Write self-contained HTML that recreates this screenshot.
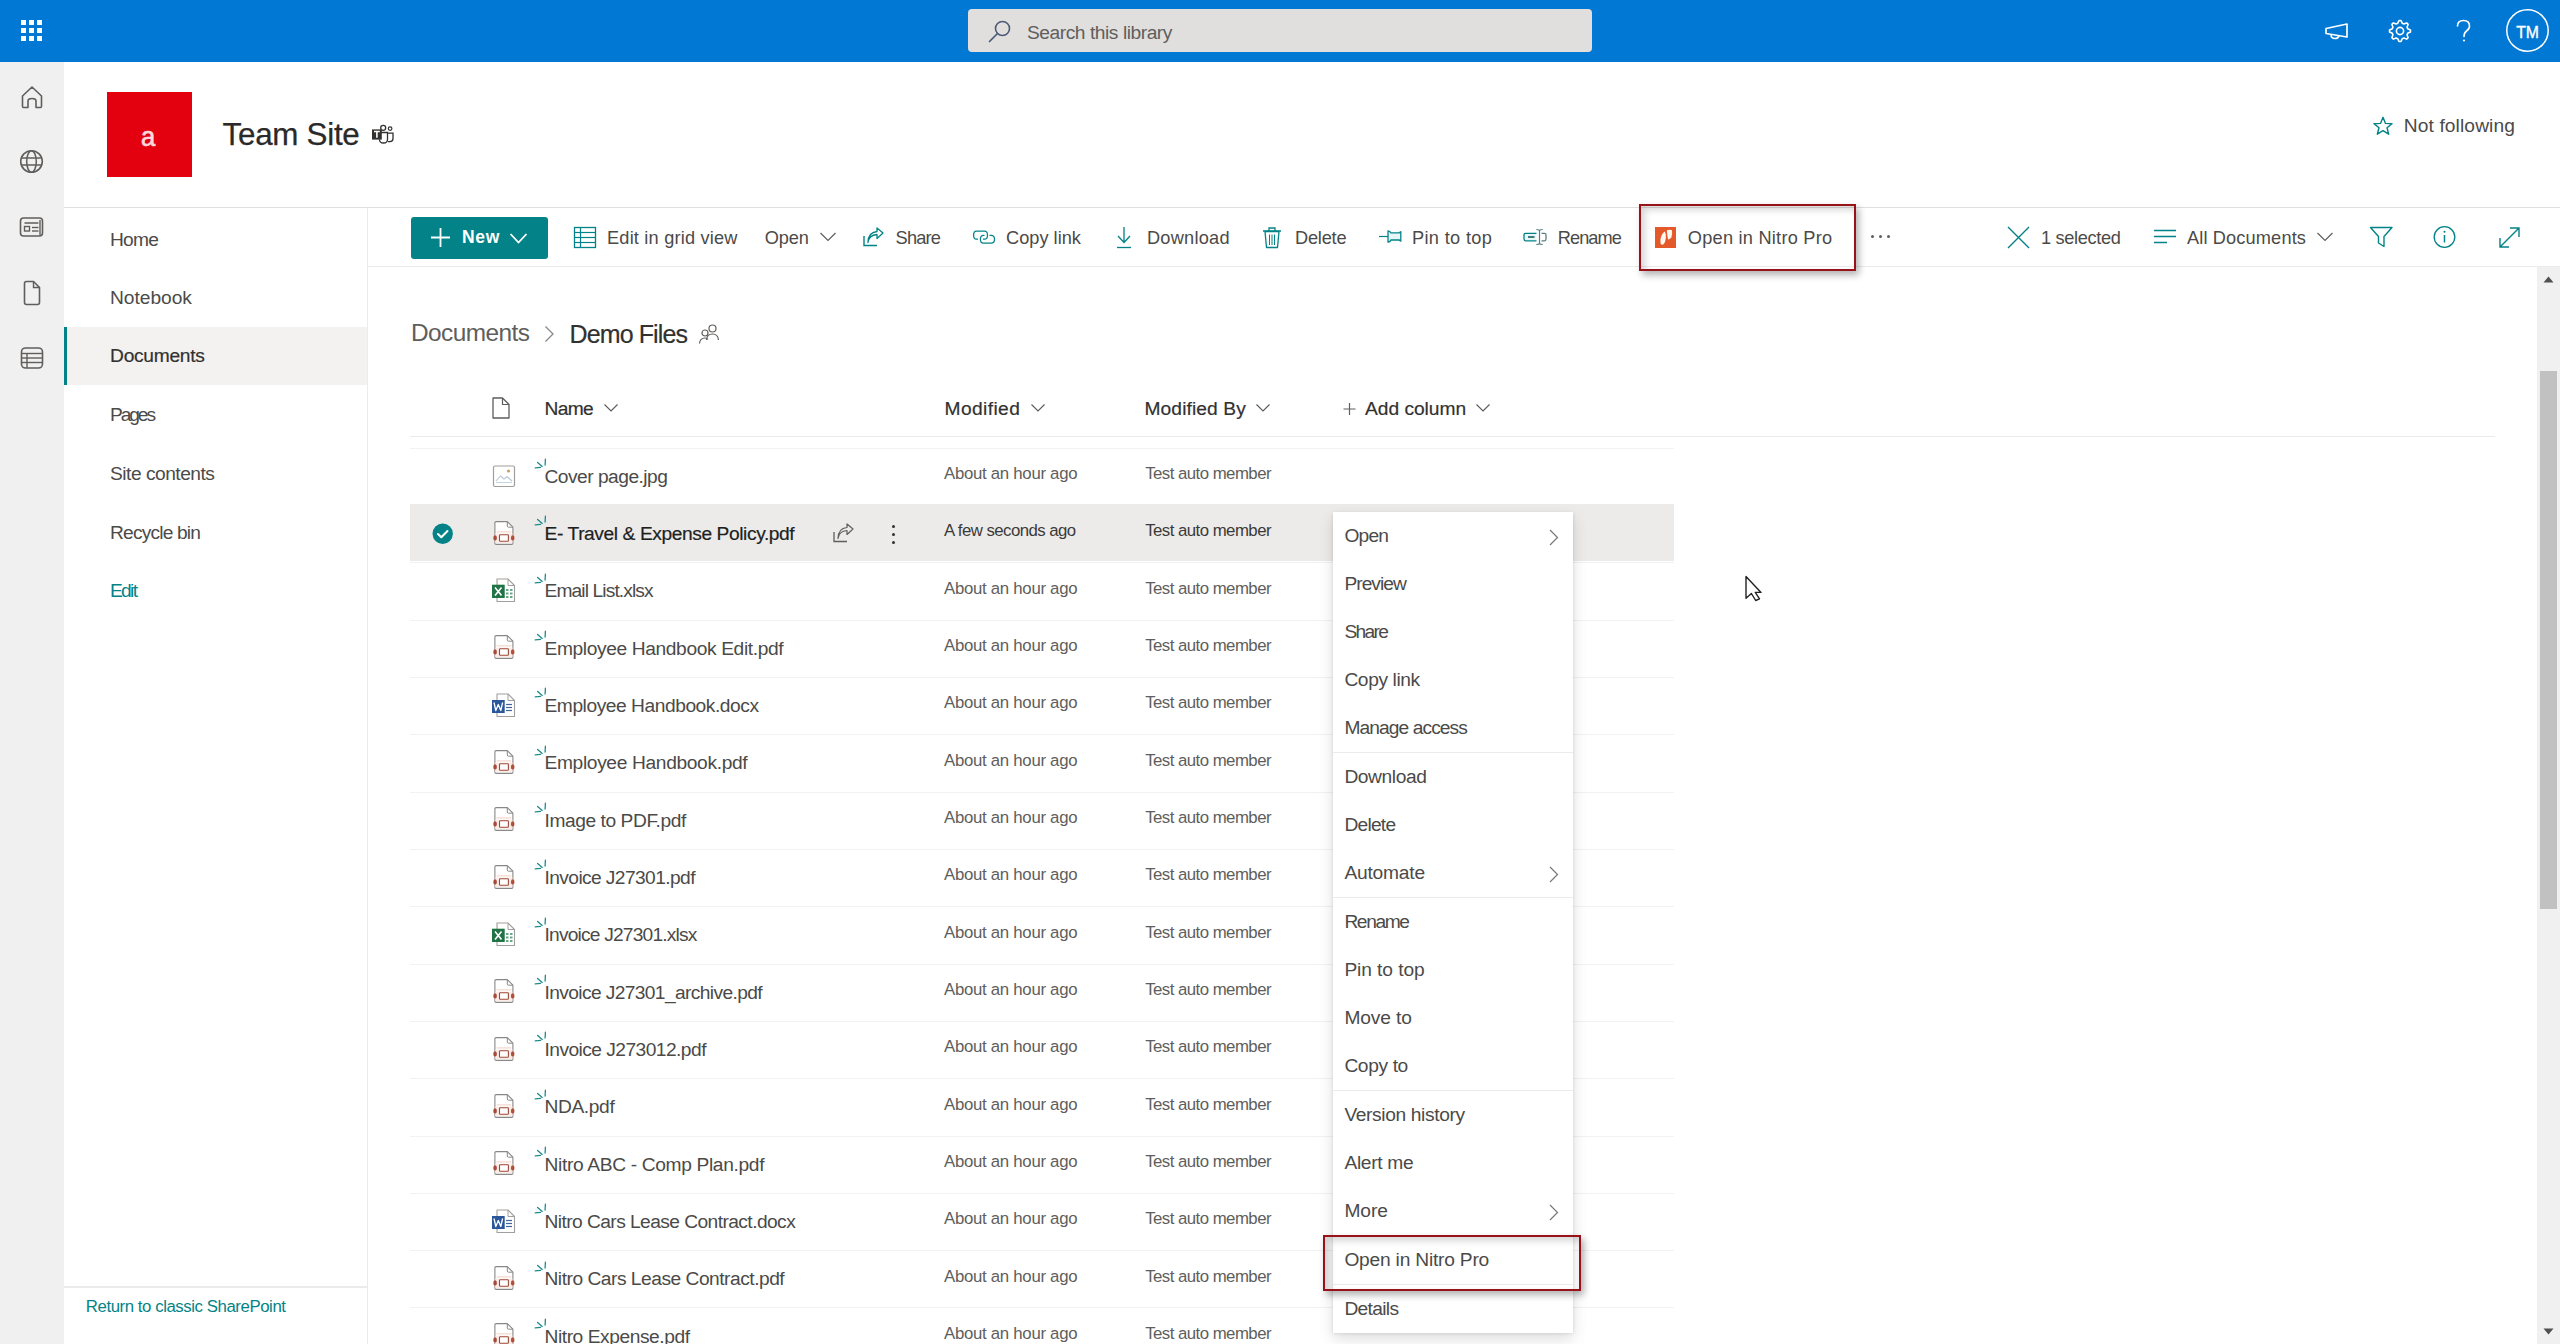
<!DOCTYPE html>
<html><head><meta charset="utf-8"><title>Demo Files - Documents</title>
<style>
html,body{margin:0;padding:0;width:2560px;height:1344px;overflow:hidden;background:#fff;}
body{position:relative;font-family:"Liberation Sans",sans-serif;}
.t{position:absolute;white-space:nowrap;}
.r{position:absolute;}
.s{position:absolute;overflow:visible;}
</style></head><body>
<div class="r" style="left:0px;top:0px;width:2560px;height:62px;background:#0078d4;"></div>
<div class="r" style="left:21px;top:20px;width:5px;height:5px;background:#ffffff;"></div>
<div class="r" style="left:21px;top:28px;width:5px;height:5px;background:#ffffff;"></div>
<div class="r" style="left:21px;top:36px;width:5px;height:5px;background:#ffffff;"></div>
<div class="r" style="left:29px;top:20px;width:5px;height:5px;background:#ffffff;"></div>
<div class="r" style="left:29px;top:28px;width:5px;height:5px;background:#ffffff;"></div>
<div class="r" style="left:29px;top:36px;width:5px;height:5px;background:#ffffff;"></div>
<div class="r" style="left:37px;top:20px;width:5px;height:5px;background:#ffffff;"></div>
<div class="r" style="left:37px;top:28px;width:5px;height:5px;background:#ffffff;"></div>
<div class="r" style="left:37px;top:36px;width:5px;height:5px;background:#ffffff;"></div>
<div class="r" style="left:968px;top:9px;width:624px;height:43px;background:#e1dfdd;border-radius:4px;"></div>
<svg class="s" style="left:987px;top:18px;" width="26" height="26" viewBox="0 0 26 26"><circle cx="15.5" cy="10.5" r="7" fill="none" stroke="#4a5a78" stroke-width="1.6"/><line x1="10.5" y1="15.5" x2="2.5" y2="23.5" stroke="#4a5a78" stroke-width="1.7" stroke-linecap="round"/></svg>
<div class="t" style="left:1027.00px;top:22.50px;font-size:19.2px;line-height:19.2px;color:#605e5c;font-weight:normal;letter-spacing:-0.453px;">Search this library</div>
<svg class="s" style="left:2322px;top:18px;" width="30" height="26" viewBox="0 0 30 26"><path d="M4 10.5 L25 6 L25 19 L4 15.5 Z" fill="none" stroke="#fff" stroke-width="1.7" stroke-linejoin="round"/><path d="M9 16.5 Q9 20.5 13 20.5 Q16.5 20.5 17 17.5" fill="none" stroke="#fff" stroke-width="1.6"/></svg>
<svg class="s" style="left:2389px;top:20px;" width="22" height="22" viewBox="0 0 22 22"><path d="M21.45 9.97 L21.45 12.03 L18.66 13.32 L18.06 14.77 L19.12 17.66 L17.66 19.12 L14.77 18.06 L13.32 18.66 L12.03 21.45 L9.97 21.45 L8.68 18.66 L7.23 18.06 L4.34 19.12 L2.88 17.66 L3.94 14.77 L3.34 13.32 L0.55 12.03 L0.55 9.97 L3.34 8.68 L3.94 7.23 L2.88 4.34 L4.34 2.88 L7.23 3.94 L8.68 3.34 L9.97 0.55 L12.03 0.55 L13.32 3.34 L14.77 3.94 L17.66 2.88 L19.12 4.34 L18.06 7.23 L18.66 8.68 Z" fill="none" stroke="#fff" stroke-width="1.6" stroke-linejoin="round"/><circle cx="11" cy="11" r="3.6" fill="none" stroke="#fff" stroke-width="1.6"/></svg>
<svg class="s" style="left:2454px;top:18px;" width="20" height="26" viewBox="0 0 20 26"><path d="M3.5 8 Q3.5 2.5 9.5 2.5 Q15.5 2.5 15.5 8 Q15.5 11 12.5 13 Q10 14.8 10 18.5" fill="none" stroke="#fff" stroke-width="1.6" stroke-linecap="round"/><circle cx="10" cy="22.5" r="1.1" fill="#fff"/></svg>
<svg class="s" style="left:2505px;top:8px;" width="46" height="46" viewBox="0 0 46 46"><circle cx="22.5" cy="22.5" r="20.7" fill="none" stroke="#fff" stroke-width="1.5"/></svg>
<div class="t" style="left:2516.18px;top:25.03px;font-size:15.8px;line-height:15.8px;color:#ffffff;font-weight:normal;letter-spacing:-0.165px;-webkit-text-stroke:0.35px #ffffff;">TM</div>
<div class="r" style="left:0px;top:62px;width:64px;height:1282px;background:#f0f0f0;"></div>
<svg class="s" style="left:19px;top:84px;" width="26" height="26" viewBox="0 0 26 26"><path d="M3.5 12 L13 3 L22.5 12 L22.5 22.5 Q22.5 23.5 21.5 23.5 L17 23.5 L17 17 Q17 14.5 13 14.5 Q9 14.5 9 17 L9 23.5 L4.5 23.5 Q3.5 23.5 3.5 22.5 Z" fill="none" stroke="#605e5c" stroke-width="1.6" stroke-linejoin="round"/></svg>
<svg class="s" style="left:19px;top:149px;" width="26" height="26" viewBox="0 0 26 26"><circle cx="12.5" cy="12.5" r="10.8" fill="none" stroke="#605e5c" stroke-width="1.6"/><ellipse cx="12.5" cy="12.5" rx="4.8" ry="10.8" fill="none" stroke="#605e5c" stroke-width="1.5"/><line x1="2" y1="9" x2="23" y2="9" stroke="#605e5c" stroke-width="1.5"/><line x1="2" y1="16" x2="23" y2="16" stroke="#605e5c" stroke-width="1.5"/></svg>
<svg class="s" style="left:19px;top:215px;" width="26" height="24" viewBox="0 0 26 24"><rect x="1.5" y="3" width="22" height="18" rx="3" fill="none" stroke="#605e5c" stroke-width="1.6"/><line x1="5.5" y1="8" x2="19.5" y2="8" stroke="#605e5c" stroke-width="1.5"/><rect x="5.5" y="11.5" width="5" height="4.5" fill="none" stroke="#605e5c" stroke-width="1.4"/><line x1="13" y1="12.5" x2="19.5" y2="12.5" stroke="#605e5c" stroke-width="1.4"/><line x1="13" y1="16" x2="19.5" y2="16" stroke="#605e5c" stroke-width="1.4"/><line x1="21" y1="5" x2="21" y2="20" stroke="#605e5c" stroke-width="1.4"/></svg>
<svg class="s" style="left:21px;top:279px;" width="22" height="28" viewBox="0 0 22 28"><path d="M3.5 4.5 Q3.5 2.5 5.5 2.5 L12.5 2.5 L18.5 8.5 L18.5 23.5 Q18.5 25.5 16.5 25.5 L5.5 25.5 Q3.5 25.5 3.5 23.5 Z" fill="none" stroke="#605e5c" stroke-width="1.6" stroke-linejoin="round"/><path d="M12.5 2.5 L12.5 8.5 L18.5 8.5" fill="none" stroke="#605e5c" stroke-width="1.4"/></svg>
<svg class="s" style="left:19px;top:345px;" width="26" height="26" viewBox="0 0 26 26"><rect x="2.5" y="3" width="21" height="20" rx="4" fill="none" stroke="#605e5c" stroke-width="1.6"/><line x1="2.5" y1="8.5" x2="23.5" y2="8.5" stroke="#605e5c" stroke-width="1.4"/><line x1="2.5" y1="13" x2="23.5" y2="13" stroke="#605e5c" stroke-width="1.4"/><line x1="2.5" y1="17.5" x2="23.5" y2="17.5" stroke="#605e5c" stroke-width="1.4"/><line x1="8" y1="8.5" x2="8" y2="23" stroke="#605e5c" stroke-width="1.4"/></svg>
<div class="r" style="left:107px;top:92px;width:85px;height:85px;background:#e3000f;"></div>
<div class="t" style="left:140.95px;top:121.67px;font-size:28.5px;line-height:28.5px;color:#fcd9dc;font-weight:normal;letter-spacing:0.000px;-webkit-text-stroke:0.7px #fcd9dc;transform:scaleX(0.9);transform-origin:0 0;">a</div>
<div class="t" style="left:222.62px;top:119.22px;font-size:31.4px;line-height:31.4px;color:#2b2a29;font-weight:normal;letter-spacing:-0.294px;-webkit-text-stroke:0.25px #2b2a29;">Team Site</div>
<svg class="s" style="left:370px;top:122px;" width="26" height="24" viewBox="0 0 26 24"><circle cx="13.2" cy="5.8" r="2.5" fill="none" stroke="#323130" stroke-width="1.3"/><circle cx="20.1" cy="6.6" r="1.8" fill="none" stroke="#323130" stroke-width="1.2"/><path d="M9.5 10.5 L17.5 10.5 L17.5 17.5 Q17.5 21 13.5 21 Q9.5 21 9.5 17.5" fill="none" stroke="#323130" stroke-width="1.3"/><path d="M18 11.2 L23 11.2 L23 16.5 Q23 19.6 20 19.6 L18 19.6" fill="none" stroke="#323130" stroke-width="1.3"/><rect x="2" y="7.4" width="9.8" height="10.2" fill="#323130"/><path d="M4 9.5 L9.8 9.5 M6.9 9.5 L6.9 15.8" stroke="#fff" stroke-width="1.6"/></svg>
<svg class="s" style="left:2372px;top:115px;" width="22" height="22" viewBox="0 0 22 22"><path d="M11 2.3 L13.5 8.4 L20 8.7 L15 12.8 L16.7 19.2 L11 15.6 L5.3 19.2 L7 12.8 L2 8.7 L8.5 8.4 Z" fill="none" stroke="#038387" stroke-width="1.4" stroke-linejoin="round"/></svg>
<div class="t" style="left:2403.75px;top:116.25px;font-size:19.2px;line-height:19.2px;color:#4b4a48;font-weight:normal;letter-spacing:0.111px;">Not following</div>
<div class="r" style="left:64px;top:207px;width:2496px;height:1px;background:#e1dfdd;"></div>
<div class="r" style="left:367px;top:208px;width:1px;height:1136px;background:#edebe9;"></div>
<div class="r" style="left:64px;top:327px;width:303px;height:58px;background:#f3f2f1;"></div>
<div class="r" style="left:64px;top:327px;width:3px;height:58px;background:#038387;"></div>
<div class="t" style="left:110.00px;top:230.00px;font-size:19.2px;line-height:19.2px;color:#4b4a48;font-weight:normal;letter-spacing:-0.742px;">Home</div>
<div class="t" style="left:110.00px;top:288.25px;font-size:19.2px;line-height:19.2px;color:#4b4a48;font-weight:normal;letter-spacing:-0.033px;">Notebook</div>
<div class="t" style="left:110.10px;top:346.25px;font-size:19.2px;line-height:19.2px;color:#323130;font-weight:normal;letter-spacing:-0.289px;-webkit-text-stroke:0.2px #323130;">Documents</div>
<div class="t" style="left:110.00px;top:405.00px;font-size:19.2px;line-height:19.2px;color:#4b4a48;font-weight:normal;letter-spacing:-2.108px;">Pages</div>
<div class="t" style="left:110.00px;top:463.75px;font-size:19.2px;line-height:19.2px;color:#4b4a48;font-weight:normal;letter-spacing:-0.500px;">Site contents</div>
<div class="t" style="left:110.00px;top:522.50px;font-size:19.2px;line-height:19.2px;color:#4b4a48;font-weight:normal;letter-spacing:-0.824px;">Recycle bin</div>
<div class="t" style="left:110.00px;top:581.25px;font-size:19.2px;line-height:19.2px;color:#038387;font-weight:normal;letter-spacing:-1.694px;">Edit</div>
<div class="r" style="left:64px;top:1286px;width:303px;height:2px;background:#edebe9;"></div>
<div class="t" style="left:85.80px;top:1299.38px;font-size:16.8px;line-height:16.8px;color:#038387;font-weight:normal;letter-spacing:-0.428px;">Return to classic SharePoint</div>
<div class="r" style="left:368px;top:266px;width:2192px;height:1px;background:#edebe9;"></div>
<div class="r" style="left:411px;top:216.5px;width:137px;height:42px;background:#038387;border-radius:3px;"></div>
<svg class="s" style="left:430px;top:227px;" width="22" height="21" viewBox="0 0 22 21"><path d="M10.5 1 L10.5 20 M1 10.5 L20 10.5" stroke="#fff" stroke-width="1.8"/></svg>
<div class="t" style="left:462.00px;top:228.69px;font-size:17.5px;line-height:17.5px;color:#ffffff;font-weight:bold;letter-spacing:0.692px;">New</div>
<svg class="s" style="left:509px;top:232px;" width="20" height="13" viewBox="0 0 20 13"><path d="M1.5 2 L9.5 10.5 L17.5 2" fill="none" stroke="#fff" stroke-width="1.8"/></svg>
<svg class="s" style="left:573px;top:226px;" width="24" height="23" viewBox="0 0 24 23"><rect x="1.5" y="1.5" width="21" height="20" fill="none" stroke="#038387" stroke-width="1.3"/><line x1="1.5" y1="6.5" x2="22.5" y2="6.5" stroke="#038387" stroke-width="1.2"/><line x1="1.5" y1="11.5" x2="22.5" y2="11.5" stroke="#038387" stroke-width="1.2"/><line x1="1.5" y1="16.5" x2="22.5" y2="16.5" stroke="#038387" stroke-width="1.2"/><line x1="7.5" y1="1.5" x2="7.5" y2="21.5" stroke="#038387" stroke-width="1.2"/></svg>
<div class="t" style="left:607.00px;top:228.59px;font-size:18.2px;line-height:18.2px;color:#4b4a48;font-weight:normal;letter-spacing:0.193px;">Edit in grid view</div>
<div class="t" style="left:764.70px;top:228.59px;font-size:18.2px;line-height:18.2px;color:#4b4a48;font-weight:normal;letter-spacing:-0.072px;">Open</div>
<svg class="s" style="left:819px;top:231px;" width="19" height="12" viewBox="0 0 19 12"><path d="M1.5 2 L9 9.5 L16.5 2" fill="none" stroke="#605e5c" stroke-width="1.2"/></svg>
<svg class="s" style="left:862px;top:227px;" width="23" height="20" viewBox="0 0 23 20"><path d="M2 9 L2 18.5 L15 18.5" fill="none" stroke="#038387" stroke-width="1.4"/><path d="M6 15.5 Q7 8 15 7.5 L15 11.5 L21 6 L15 1 L15 4.5 Q6 5.5 6 15.5 Z" fill="none" stroke="#038387" stroke-width="1.3" stroke-linejoin="round"/></svg>
<div class="t" style="left:895.60px;top:228.59px;font-size:18.2px;line-height:18.2px;color:#4b4a48;font-weight:normal;letter-spacing:-0.789px;">Share</div>
<svg class="s" style="left:972px;top:229px;" width="24" height="17" viewBox="0 0 24 17"><path d="M6 10.2 L4.5 10.2 Q1.6 10.2 1.6 6.2 Q1.6 2.2 4.5 2.2 L12.5 2.2 Q15.5 2.2 15.5 6.2 Q15.5 10.2 12.5 10.2 L11 10.2" fill="none" stroke="#038387" stroke-width="1.25"/><path d="M17.5 6.4 L19 6.4 Q22.5 6.4 22.5 10.3 Q22.5 14.2 19 14.2 L11.5 14.2 Q8.4 14.2 8.4 10.3 Q8.4 6.4 11.5 6.4 L12.5 6.4" fill="none" stroke="#038387" stroke-width="1.25"/></svg>
<div class="t" style="left:1006.00px;top:228.59px;font-size:18.2px;line-height:18.2px;color:#4b4a48;font-weight:normal;letter-spacing:0.013px;">Copy link</div>
<svg class="s" style="left:1114px;top:226px;" width="20" height="23" viewBox="0 0 20 23"><path d="M10 1 L10 16 M4 10 L10 16.5 L16 10" fill="none" stroke="#038387" stroke-width="1.3"/><line x1="3" y1="21.5" x2="17" y2="21.5" stroke="#038387" stroke-width="1.3"/></svg>
<div class="t" style="left:1147.00px;top:228.59px;font-size:18.2px;line-height:18.2px;color:#4b4a48;font-weight:normal;letter-spacing:0.238px;">Download</div>
<svg class="s" style="left:1261px;top:226px;" width="22" height="23" viewBox="0 0 22 23"><path d="M4 5.5 L18 5.5 L16.5 21.5 L5.5 21.5 Z" fill="none" stroke="#038387" stroke-width="1.3" stroke-linejoin="round"/><path d="M2 5 L20 5 M8 5 L8 2 L14 2 L14 5" fill="none" stroke="#038387" stroke-width="1.3"/><path d="M8.5 8.5 L8.5 19 M11 8.5 L11 19 M13.5 8.5 L13.5 19" stroke="#038387" stroke-width="1"/></svg>
<div class="t" style="left:1295.00px;top:228.59px;font-size:18.2px;line-height:18.2px;color:#4b4a48;font-weight:normal;letter-spacing:-0.203px;">Delete</div>
<svg class="s" style="left:1376px;top:228px;" width="28" height="18" viewBox="0 0 28 18"><path d="M3 8.5 L12 8.5" stroke="#038387" stroke-width="1.2"/><path d="M12 2.8 Q14.3 3 14.8 4.8 L23.5 4.8 Q24 3.6 24.8 3.6 L24.8 13.2 Q24 13.2 23.5 12 L14.8 12 Q14.3 14 12 14.2 Z" fill="#e6f6f6" stroke="#038387" stroke-width="1.3" stroke-linejoin="round"/></svg>
<div class="t" style="left:1412.00px;top:228.59px;font-size:18.2px;line-height:18.2px;color:#4b4a48;font-weight:normal;letter-spacing:0.345px;">Pin to top</div>
<svg class="s" style="left:1522px;top:227px;" width="27" height="20" viewBox="0 0 27 20"><path d="M14.5 6.3 L3.5 6.3 Q2 6.3 2 8 L2 12 Q2 13.8 3.5 13.8 L14.5 13.8" fill="#e6f6f6" stroke="#038387" stroke-width="1.3"/><path d="M6 10 L12.5 10" stroke="#2f6f70" stroke-width="1.8"/><path d="M19.5 6.3 L22.5 6.3 Q24 6.3 24 8 L24 12 Q24 13.8 22.5 13.8 L19.5 13.8" fill="none" stroke="#5a7f80" stroke-width="1.3"/><path d="M17.5 3 L17.5 17 M14.3 2.5 Q17.5 2.5 17.5 4 Q17.5 2.5 20.7 2.5 M14.3 17.5 Q17.5 17.5 17.5 16 Q17.5 17.5 20.7 17.5" fill="none" stroke="#5a7f80" stroke-width="1.2"/></svg>
<div class="t" style="left:1557.70px;top:228.59px;font-size:18.2px;line-height:18.2px;color:#4b4a48;font-weight:normal;letter-spacing:-0.899px;">Rename</div>
<svg class="s" style="left:1655px;top:227px;" width="21" height="21" viewBox="0 0 21 21"><rect x="0" y="0" width="21" height="21" fill="#e3592a"/><path d="M5.6 16.8 Q4.6 12 6.8 8 Q8.3 5.5 9.8 4.6 Q11.2 6.5 10.8 11 Q10.4 15.5 8.6 17.3 Q6.8 18.2 5.6 16.8 Z" fill="#fff8f0"/><path d="M11.8 3.4 Q14.5 2.2 17 3.2 Q17.6 7 16.3 10.5 Q14.8 12.6 13 12.6 Q12.3 8 11.8 3.4 Z" fill="#fff8f0"/></svg>
<div class="t" style="left:1687.80px;top:228.59px;font-size:18.2px;line-height:18.2px;color:#4b4a48;font-weight:normal;letter-spacing:0.237px;">Open in Nitro Pro</div>
<div class="r" style="left:1871px;top:235px;width:3px;height:3px;background:#605e5c;border-radius:50%;"></div>
<div class="r" style="left:1879px;top:235px;width:3px;height:3px;background:#605e5c;border-radius:50%;"></div>
<div class="r" style="left:1887px;top:235px;width:3px;height:3px;background:#605e5c;border-radius:50%;"></div>
<svg class="s" style="left:2006px;top:225px;" width="25" height="25" viewBox="0 0 25 25"><path d="M2 2 L23 23 M23 2 L2 23" stroke="#038387" stroke-width="1.4"/></svg>
<div class="t" style="left:2041.00px;top:228.59px;font-size:18.2px;line-height:18.2px;color:#4b4a48;font-weight:normal;letter-spacing:-0.330px;">1 selected</div>
<svg class="s" style="left:2153px;top:229px;" width="24" height="15" viewBox="0 0 24 15"><path d="M1 1.5 L23 1.5 M1 7.5 L23 7.5 M1 13.5 L14 13.5" stroke="#038387" stroke-width="1.4"/></svg>
<div class="t" style="left:2187.00px;top:228.59px;font-size:18.2px;line-height:18.2px;color:#4b4a48;font-weight:normal;letter-spacing:0.139px;">All Documents</div>
<svg class="s" style="left:2316px;top:231px;" width="19" height="12" viewBox="0 0 19 12"><path d="M1.5 2 L9 9.5 L16.5 2" fill="none" stroke="#605e5c" stroke-width="1.2"/></svg>
<svg class="s" style="left:2369px;top:226px;" width="25" height="22" viewBox="0 0 25 22"><path d="M1.5 1.5 L23 1.5 L15 10.5 L15 20.5 L9.5 17 L9.5 10.5 Z" fill="none" stroke="#038387" stroke-width="1.4" stroke-linejoin="round"/></svg>
<svg class="s" style="left:2432px;top:225px;" width="25" height="24" viewBox="0 0 25 24"><circle cx="12.5" cy="12" r="10.3" fill="none" stroke="#038387" stroke-width="1.3"/><line x1="12.5" y1="10" x2="12.5" y2="17.5" stroke="#038387" stroke-width="1.5"/><circle cx="12.5" cy="6.8" r="1" fill="#038387"/></svg>
<svg class="s" style="left:2498px;top:226px;" width="23" height="23" viewBox="0 0 23 23"><path d="M2 21 L21 2 M12 2 L21 2 L21 11 M2 12 L2 21 L11 21" fill="none" stroke="#038387" stroke-width="1.4"/></svg>
<div class="t" style="left:411.00px;top:320.60px;font-size:24.4px;line-height:24.4px;color:#605e5c;font-weight:normal;letter-spacing:-0.552px;">Documents</div>
<svg class="s" style="left:542px;top:324px;" width="14" height="20" viewBox="0 0 14 20"><path d="M3.5 2.5 L11 10 L3.5 17.5" fill="none" stroke="#8a8886" stroke-width="1.3"/></svg>
<div class="t" style="left:569.60px;top:321.84px;font-size:25px;line-height:25px;color:#323130;font-weight:normal;letter-spacing:-0.903px;-webkit-text-stroke:0.2px #323130;">Demo Files</div>
<svg class="s" style="left:698px;top:323px;" width="22" height="22" viewBox="0 0 22 22"><circle cx="14.5" cy="5.5" r="3.5" fill="none" stroke="#605e5c" stroke-width="1.2"/><path d="M8.5 17 Q9 11 14.5 11 Q20 11 20.5 17" fill="none" stroke="#605e5c" stroke-width="1.2"/><circle cx="7" cy="10" r="3" fill="none" stroke="#605e5c" stroke-width="1.2"/><path d="M1.5 20.5 Q2 15 7 15 Q9 15 10 16.5" fill="none" stroke="#605e5c" stroke-width="1.2"/></svg>
<svg class="s" style="left:490px;top:396px;" width="22" height="24" viewBox="0 0 22 24"><path d="M3 2 L12.5 2 L19 8.5 L19 22 L3 22 Z" fill="none" stroke="#605e5c" stroke-width="1.3" stroke-linejoin="round"/><path d="M12.5 2 L12.5 8.5 L19 8.5" fill="none" stroke="#605e5c" stroke-width="1.2"/></svg>
<div class="t" style="left:544.60px;top:398.95px;font-size:19.2px;line-height:19.2px;color:#323130;font-weight:normal;letter-spacing:-0.725px;-webkit-text-stroke:0.2px #323130;">Name</div>
<svg class="s" style="left:603px;top:403px;" width="16" height="11" viewBox="0 0 16 11"><path d="M1.5 1.5 L8 8 L14.5 1.5" fill="none" stroke="#605e5c" stroke-width="1.2"/></svg>
<div class="t" style="left:944.50px;top:398.95px;font-size:19.2px;line-height:19.2px;color:#323130;font-weight:normal;letter-spacing:0.403px;-webkit-text-stroke:0.2px #323130;">Modified</div>
<svg class="s" style="left:1029.5px;top:403px;" width="16" height="11" viewBox="0 0 16 11"><path d="M1.5 1.5 L8 8 L14.5 1.5" fill="none" stroke="#605e5c" stroke-width="1.2"/></svg>
<div class="t" style="left:1144.50px;top:398.95px;font-size:19.2px;line-height:19.2px;color:#323130;font-weight:normal;letter-spacing:0.108px;-webkit-text-stroke:0.2px #323130;">Modified By</div>
<svg class="s" style="left:1254.5px;top:403px;" width="16" height="11" viewBox="0 0 16 11"><path d="M1.5 1.5 L8 8 L14.5 1.5" fill="none" stroke="#605e5c" stroke-width="1.2"/></svg>
<svg class="s" style="left:1342px;top:402px;" width="15" height="15" viewBox="0 0 15 15"><path d="M7.5 1 L7.5 13 M1.5 7 L13.5 7" stroke="#605e5c" stroke-width="1.2"/></svg>
<div class="t" style="left:1365.10px;top:398.95px;font-size:19.2px;line-height:19.2px;color:#323130;font-weight:normal;letter-spacing:-0.038px;-webkit-text-stroke:0.2px #323130;">Add column</div>
<svg class="s" style="left:1475px;top:403px;" width="16" height="11" viewBox="0 0 16 11"><path d="M1.5 1.5 L8 8 L14.5 1.5" fill="none" stroke="#605e5c" stroke-width="1.2"/></svg>
<div class="r" style="left:410px;top:436px;width:2085px;height:1px;background:#edebe9;"></div>
<div class="r" style="left:410px;top:447.5px;width:1264px;height:1px;background:#f3f2f1;"></div>
<svg class="s" style="left:492px;top:464.5px;" width="24" height="23" viewBox="0 0 24 23"><rect x="1.5" y="1" width="21" height="20.5" rx="1.5" fill="#fff" stroke="#a19f9d" stroke-width="1.2"/><circle cx="16.5" cy="6" r="1.6" fill="#c8a060"/><path d="M4 16 L8.5 11 L12 14 L15 11.5 L20 16" fill="none" stroke="#b8c8d8" stroke-width="1.1"/><line x1="4" y1="17.5" x2="20" y2="17.5" stroke="#c8d4de" stroke-width="1"/></svg>
<svg class="s" style="left:533px;top:458.0px;" width="15" height="13" viewBox="0 0 15 13"><path d="M2.2 9.9 L7.6 9.4 M4.6 4.4 L9.2 8.4 M12.4 1.2 L12.1 7" stroke="#1f8a8c" stroke-width="1.3" stroke-linecap="round"/></svg>
<div class="t" style="left:544.50px;top:466.75px;font-size:19.2px;line-height:19.2px;color:#4b4a48;font-weight:normal;letter-spacing:-0.516px;">Cover page.jpg</div>
<div class="t" style="left:944.00px;top:466.08px;font-size:16.8px;line-height:16.8px;color:#605e5c;font-weight:normal;letter-spacing:-0.284px;">About an hour ago</div>
<div class="t" style="left:1145.20px;top:466.08px;font-size:16.8px;line-height:16.8px;color:#605e5c;font-weight:normal;letter-spacing:-0.530px;">Test auto member</div>
<div class="r" style="left:410px;top:504.23px;width:1264px;height:57.2px;background:#edebe9;"></div>
<svg class="s" style="left:492px;top:520.833px;" width="24" height="25" viewBox="0 0 24 25"><path d="M2.9 1.8 Q2.9 0.6 4.1 0.6 L15.3 0.6 L20.9 6.2 L20.9 22.2 Q20.9 23.4 19.7 23.4 L4.1 23.4 Q2.9 23.4 2.9 22.2 Z" fill="#fff" stroke="#8a8886" stroke-width="1.1" stroke-linejoin="round"/><path d="M15.3 0.6 L15.3 5 Q15.3 6.2 16.5 6.2 L20.9 6.2" fill="none" stroke="#8a8886" stroke-width="1"/><line x1="4.5" y1="10.9" x2="19.3" y2="10.9" stroke="#efc4b8" stroke-width="0.8"/><rect x="3.4" y="12.6" width="17" height="9.4" fill="#fdebe5"/><rect x="7.5" y="13.8" width="8.9" height="6.4" rx="0.8" fill="#fff" stroke="#9c4a3a" stroke-width="1.1"/><ellipse cx="3.1" cy="16.9" rx="1.8" ry="2.6" fill="#a9493a"/><ellipse cx="20.7" cy="16.9" rx="1.8" ry="2.6" fill="#b0503c"/></svg>
<svg class="s" style="left:533px;top:515.333px;" width="15" height="13" viewBox="0 0 15 13"><path d="M2.2 9.9 L7.6 9.4 M4.6 4.4 L9.2 8.4 M12.4 1.2 L12.1 7" stroke="#1f8a8c" stroke-width="1.3" stroke-linecap="round"/></svg>
<div class="t" style="left:544.60px;top:523.75px;font-size:19.2px;line-height:19.2px;color:#201f1e;font-weight:normal;letter-spacing:-0.411px;-webkit-text-stroke:0.2px #201f1e;">E- Travel &amp; Expense Policy.pdf</div>
<svg class="s" style="left:832px;top:522.833px;" width="25" height="21" viewBox="0 0 25 21"><path d="M2 9 L2 18.5 L15 18.5" fill="none" stroke="#605e5c" stroke-width="1.3"/><path d="M6 15.5 Q7 8 15 7.5 L15 11.5 L21 6 L15 1 L15 4.5 Q6 5.5 6 15.5 Z" fill="none" stroke="#605e5c" stroke-width="1.2" stroke-linejoin="round"/></svg>
<div class="r" style="left:891.5px;top:524.83px;width:3px;height:3px;background:#323130;border-radius:50%;"></div>
<div class="r" style="left:891.5px;top:532.83px;width:3px;height:3px;background:#323130;border-radius:50%;"></div>
<div class="r" style="left:891.5px;top:540.83px;width:3px;height:3px;background:#323130;border-radius:50%;"></div>
<div class="t" style="left:944.00px;top:523.11px;font-size:16.8px;line-height:16.8px;color:#3b3a39;font-weight:normal;letter-spacing:-0.546px;">A few seconds ago</div>
<div class="t" style="left:1145.20px;top:523.11px;font-size:16.8px;line-height:16.8px;color:#3b3a39;font-weight:normal;letter-spacing:-0.530px;">Test auto member</div>
<div class="r" style="left:410px;top:562.17px;width:1264px;height:1px;background:#f3f2f1;"></div>
<svg class="s" style="left:491px;top:578.0px;" width="26" height="25" viewBox="0 0 26 25"><path d="M6 1 L17 1 L23.5 7.5 L23.5 23.5 L6 23.5 Z" fill="#fff" stroke="#a19f9d" stroke-width="1.1" stroke-linejoin="round"/><path d="M17 1 L17 7.5 L23.5 7.5" fill="none" stroke="#a19f9d" stroke-width="1"/><g fill="#6aa888"><rect x="15" y="11" width="2.5" height="2"/><rect x="19" y="11" width="2.5" height="2"/><rect x="15" y="14.5" width="2.5" height="2"/><rect x="19" y="14.5" width="2.5" height="2"/><rect x="15" y="18" width="2.5" height="2"/><rect x="19" y="18" width="2.5" height="2"/></g><rect x="1" y="6.7" width="12.7" height="13.3" fill="#217346"/><path d="M4 9.5 L10.5 17.5 M10.5 9.5 L4 17.5" stroke="#fff" stroke-width="1.6"/></svg>
<svg class="s" style="left:533px;top:572.6659999999999px;" width="15" height="13" viewBox="0 0 15 13"><path d="M2.2 9.9 L7.6 9.4 M4.6 4.4 L9.2 8.4 M12.4 1.2 L12.1 7" stroke="#1f8a8c" stroke-width="1.3" stroke-linecap="round"/></svg>
<div class="t" style="left:544.50px;top:581.41px;font-size:19.2px;line-height:19.2px;color:#4b4a48;font-weight:normal;letter-spacing:-0.884px;">Email List.xlsx</div>
<div class="t" style="left:944.00px;top:580.74px;font-size:16.8px;line-height:16.8px;color:#605e5c;font-weight:normal;letter-spacing:-0.284px;">About an hour ago</div>
<div class="t" style="left:1145.20px;top:580.74px;font-size:16.8px;line-height:16.8px;color:#605e5c;font-weight:normal;letter-spacing:-0.530px;">Test auto member</div>
<div class="r" style="left:410px;top:619.5px;width:1264px;height:1px;background:#f3f2f1;"></div>
<svg class="s" style="left:492px;top:635.499px;" width="24" height="25" viewBox="0 0 24 25"><path d="M2.9 1.8 Q2.9 0.6 4.1 0.6 L15.3 0.6 L20.9 6.2 L20.9 22.2 Q20.9 23.4 19.7 23.4 L4.1 23.4 Q2.9 23.4 2.9 22.2 Z" fill="#fff" stroke="#8a8886" stroke-width="1.1" stroke-linejoin="round"/><path d="M15.3 0.6 L15.3 5 Q15.3 6.2 16.5 6.2 L20.9 6.2" fill="none" stroke="#8a8886" stroke-width="1"/><line x1="4.5" y1="10.9" x2="19.3" y2="10.9" stroke="#efc4b8" stroke-width="0.8"/><rect x="3.4" y="12.6" width="17" height="9.4" fill="#fdebe5"/><rect x="7.5" y="13.8" width="8.9" height="6.4" rx="0.8" fill="#fff" stroke="#9c4a3a" stroke-width="1.1"/><ellipse cx="3.1" cy="16.9" rx="1.8" ry="2.6" fill="#a9493a"/><ellipse cx="20.7" cy="16.9" rx="1.8" ry="2.6" fill="#b0503c"/></svg>
<svg class="s" style="left:533px;top:629.999px;" width="15" height="13" viewBox="0 0 15 13"><path d="M2.2 9.9 L7.6 9.4 M4.6 4.4 L9.2 8.4 M12.4 1.2 L12.1 7" stroke="#1f8a8c" stroke-width="1.3" stroke-linecap="round"/></svg>
<div class="t" style="left:544.50px;top:638.75px;font-size:19.2px;line-height:19.2px;color:#4b4a48;font-weight:normal;letter-spacing:-0.377px;">Employee Handbook Edit.pdf</div>
<div class="t" style="left:944.00px;top:638.08px;font-size:16.8px;line-height:16.8px;color:#605e5c;font-weight:normal;letter-spacing:-0.284px;">About an hour ago</div>
<div class="t" style="left:1145.20px;top:638.08px;font-size:16.8px;line-height:16.8px;color:#605e5c;font-weight:normal;letter-spacing:-0.530px;">Test auto member</div>
<div class="r" style="left:410px;top:676.83px;width:1264px;height:1px;background:#f3f2f1;"></div>
<svg class="s" style="left:491px;top:692.6659999999999px;" width="26" height="25" viewBox="0 0 26 25"><path d="M6 1 L17 1 L23.5 7.5 L23.5 23.5 L6 23.5 Z" fill="#fff" stroke="#a19f9d" stroke-width="1.1" stroke-linejoin="round"/><path d="M17 1 L17 7.5 L23.5 7.5" fill="none" stroke="#a19f9d" stroke-width="1"/><g stroke="#41649c" stroke-width="1.2"><line x1="15" y1="11.5" x2="21" y2="11.5"/><line x1="15" y1="14.5" x2="21" y2="14.5"/><line x1="15" y1="17.5" x2="21" y2="17.5"/></g><rect x="1" y="7" width="12.7" height="13" fill="#2b579a"/><path d="M3 9.5 L4.8 17.5 L7.3 11.5 L9.8 17.5 L11.6 9.5" fill="none" stroke="#fff" stroke-width="1.3" stroke-linejoin="round"/></svg>
<svg class="s" style="left:533px;top:687.332px;" width="15" height="13" viewBox="0 0 15 13"><path d="M2.2 9.9 L7.6 9.4 M4.6 4.4 L9.2 8.4 M12.4 1.2 L12.1 7" stroke="#1f8a8c" stroke-width="1.3" stroke-linecap="round"/></svg>
<div class="t" style="left:544.50px;top:696.08px;font-size:19.2px;line-height:19.2px;color:#4b4a48;font-weight:normal;letter-spacing:-0.450px;">Employee Handbook.docx</div>
<div class="t" style="left:944.00px;top:695.41px;font-size:16.8px;line-height:16.8px;color:#605e5c;font-weight:normal;letter-spacing:-0.284px;">About an hour ago</div>
<div class="t" style="left:1145.20px;top:695.41px;font-size:16.8px;line-height:16.8px;color:#605e5c;font-weight:normal;letter-spacing:-0.530px;">Test auto member</div>
<div class="r" style="left:410px;top:734.16px;width:1264px;height:1px;background:#f3f2f1;"></div>
<svg class="s" style="left:492px;top:750.165px;" width="24" height="25" viewBox="0 0 24 25"><path d="M2.9 1.8 Q2.9 0.6 4.1 0.6 L15.3 0.6 L20.9 6.2 L20.9 22.2 Q20.9 23.4 19.7 23.4 L4.1 23.4 Q2.9 23.4 2.9 22.2 Z" fill="#fff" stroke="#8a8886" stroke-width="1.1" stroke-linejoin="round"/><path d="M15.3 0.6 L15.3 5 Q15.3 6.2 16.5 6.2 L20.9 6.2" fill="none" stroke="#8a8886" stroke-width="1"/><line x1="4.5" y1="10.9" x2="19.3" y2="10.9" stroke="#efc4b8" stroke-width="0.8"/><rect x="3.4" y="12.6" width="17" height="9.4" fill="#fdebe5"/><rect x="7.5" y="13.8" width="8.9" height="6.4" rx="0.8" fill="#fff" stroke="#9c4a3a" stroke-width="1.1"/><ellipse cx="3.1" cy="16.9" rx="1.8" ry="2.6" fill="#a9493a"/><ellipse cx="20.7" cy="16.9" rx="1.8" ry="2.6" fill="#b0503c"/></svg>
<svg class="s" style="left:533px;top:744.665px;" width="15" height="13" viewBox="0 0 15 13"><path d="M2.2 9.9 L7.6 9.4 M4.6 4.4 L9.2 8.4 M12.4 1.2 L12.1 7" stroke="#1f8a8c" stroke-width="1.3" stroke-linecap="round"/></svg>
<div class="t" style="left:544.50px;top:753.41px;font-size:19.2px;line-height:19.2px;color:#4b4a48;font-weight:normal;letter-spacing:-0.351px;">Employee Handbook.pdf</div>
<div class="t" style="left:944.00px;top:752.74px;font-size:16.8px;line-height:16.8px;color:#605e5c;font-weight:normal;letter-spacing:-0.284px;">About an hour ago</div>
<div class="t" style="left:1145.20px;top:752.74px;font-size:16.8px;line-height:16.8px;color:#605e5c;font-weight:normal;letter-spacing:-0.530px;">Test auto member</div>
<div class="r" style="left:410px;top:791.5px;width:1264px;height:1px;background:#f3f2f1;"></div>
<svg class="s" style="left:492px;top:807.498px;" width="24" height="25" viewBox="0 0 24 25"><path d="M2.9 1.8 Q2.9 0.6 4.1 0.6 L15.3 0.6 L20.9 6.2 L20.9 22.2 Q20.9 23.4 19.7 23.4 L4.1 23.4 Q2.9 23.4 2.9 22.2 Z" fill="#fff" stroke="#8a8886" stroke-width="1.1" stroke-linejoin="round"/><path d="M15.3 0.6 L15.3 5 Q15.3 6.2 16.5 6.2 L20.9 6.2" fill="none" stroke="#8a8886" stroke-width="1"/><line x1="4.5" y1="10.9" x2="19.3" y2="10.9" stroke="#efc4b8" stroke-width="0.8"/><rect x="3.4" y="12.6" width="17" height="9.4" fill="#fdebe5"/><rect x="7.5" y="13.8" width="8.9" height="6.4" rx="0.8" fill="#fff" stroke="#9c4a3a" stroke-width="1.1"/><ellipse cx="3.1" cy="16.9" rx="1.8" ry="2.6" fill="#a9493a"/><ellipse cx="20.7" cy="16.9" rx="1.8" ry="2.6" fill="#b0503c"/></svg>
<svg class="s" style="left:533px;top:801.998px;" width="15" height="13" viewBox="0 0 15 13"><path d="M2.2 9.9 L7.6 9.4 M4.6 4.4 L9.2 8.4 M12.4 1.2 L12.1 7" stroke="#1f8a8c" stroke-width="1.3" stroke-linecap="round"/></svg>
<div class="t" style="left:544.50px;top:810.75px;font-size:19.2px;line-height:19.2px;color:#4b4a48;font-weight:normal;letter-spacing:-0.432px;">Image to PDF.pdf</div>
<div class="t" style="left:944.00px;top:810.08px;font-size:16.8px;line-height:16.8px;color:#605e5c;font-weight:normal;letter-spacing:-0.284px;">About an hour ago</div>
<div class="t" style="left:1145.20px;top:810.08px;font-size:16.8px;line-height:16.8px;color:#605e5c;font-weight:normal;letter-spacing:-0.530px;">Test auto member</div>
<div class="r" style="left:410px;top:848.83px;width:1264px;height:1px;background:#f3f2f1;"></div>
<svg class="s" style="left:492px;top:864.831px;" width="24" height="25" viewBox="0 0 24 25"><path d="M2.9 1.8 Q2.9 0.6 4.1 0.6 L15.3 0.6 L20.9 6.2 L20.9 22.2 Q20.9 23.4 19.7 23.4 L4.1 23.4 Q2.9 23.4 2.9 22.2 Z" fill="#fff" stroke="#8a8886" stroke-width="1.1" stroke-linejoin="round"/><path d="M15.3 0.6 L15.3 5 Q15.3 6.2 16.5 6.2 L20.9 6.2" fill="none" stroke="#8a8886" stroke-width="1"/><line x1="4.5" y1="10.9" x2="19.3" y2="10.9" stroke="#efc4b8" stroke-width="0.8"/><rect x="3.4" y="12.6" width="17" height="9.4" fill="#fdebe5"/><rect x="7.5" y="13.8" width="8.9" height="6.4" rx="0.8" fill="#fff" stroke="#9c4a3a" stroke-width="1.1"/><ellipse cx="3.1" cy="16.9" rx="1.8" ry="2.6" fill="#a9493a"/><ellipse cx="20.7" cy="16.9" rx="1.8" ry="2.6" fill="#b0503c"/></svg>
<svg class="s" style="left:533px;top:859.331px;" width="15" height="13" viewBox="0 0 15 13"><path d="M2.2 9.9 L7.6 9.4 M4.6 4.4 L9.2 8.4 M12.4 1.2 L12.1 7" stroke="#1f8a8c" stroke-width="1.3" stroke-linecap="round"/></svg>
<div class="t" style="left:544.50px;top:868.08px;font-size:19.2px;line-height:19.2px;color:#4b4a48;font-weight:normal;letter-spacing:-0.595px;">Invoice J27301.pdf</div>
<div class="t" style="left:944.00px;top:867.41px;font-size:16.8px;line-height:16.8px;color:#605e5c;font-weight:normal;letter-spacing:-0.284px;">About an hour ago</div>
<div class="t" style="left:1145.20px;top:867.41px;font-size:16.8px;line-height:16.8px;color:#605e5c;font-weight:normal;letter-spacing:-0.530px;">Test auto member</div>
<div class="r" style="left:410px;top:906.16px;width:1264px;height:1px;background:#f3f2f1;"></div>
<svg class="s" style="left:491px;top:921.998px;" width="26" height="25" viewBox="0 0 26 25"><path d="M6 1 L17 1 L23.5 7.5 L23.5 23.5 L6 23.5 Z" fill="#fff" stroke="#a19f9d" stroke-width="1.1" stroke-linejoin="round"/><path d="M17 1 L17 7.5 L23.5 7.5" fill="none" stroke="#a19f9d" stroke-width="1"/><g fill="#6aa888"><rect x="15" y="11" width="2.5" height="2"/><rect x="19" y="11" width="2.5" height="2"/><rect x="15" y="14.5" width="2.5" height="2"/><rect x="19" y="14.5" width="2.5" height="2"/><rect x="15" y="18" width="2.5" height="2"/><rect x="19" y="18" width="2.5" height="2"/></g><rect x="1" y="6.7" width="12.7" height="13.3" fill="#217346"/><path d="M4 9.5 L10.5 17.5 M10.5 9.5 L4 17.5" stroke="#fff" stroke-width="1.6"/></svg>
<svg class="s" style="left:533px;top:916.664px;" width="15" height="13" viewBox="0 0 15 13"><path d="M2.2 9.9 L7.6 9.4 M4.6 4.4 L9.2 8.4 M12.4 1.2 L12.1 7" stroke="#1f8a8c" stroke-width="1.3" stroke-linecap="round"/></svg>
<div class="t" style="left:544.50px;top:925.41px;font-size:19.2px;line-height:19.2px;color:#4b4a48;font-weight:normal;letter-spacing:-0.809px;">Invoice J27301.xlsx</div>
<div class="t" style="left:944.00px;top:924.74px;font-size:16.8px;line-height:16.8px;color:#605e5c;font-weight:normal;letter-spacing:-0.284px;">About an hour ago</div>
<div class="t" style="left:1145.20px;top:924.74px;font-size:16.8px;line-height:16.8px;color:#605e5c;font-weight:normal;letter-spacing:-0.530px;">Test auto member</div>
<div class="r" style="left:410px;top:963.5px;width:1264px;height:1px;background:#f3f2f1;"></div>
<svg class="s" style="left:492px;top:979.497px;" width="24" height="25" viewBox="0 0 24 25"><path d="M2.9 1.8 Q2.9 0.6 4.1 0.6 L15.3 0.6 L20.9 6.2 L20.9 22.2 Q20.9 23.4 19.7 23.4 L4.1 23.4 Q2.9 23.4 2.9 22.2 Z" fill="#fff" stroke="#8a8886" stroke-width="1.1" stroke-linejoin="round"/><path d="M15.3 0.6 L15.3 5 Q15.3 6.2 16.5 6.2 L20.9 6.2" fill="none" stroke="#8a8886" stroke-width="1"/><line x1="4.5" y1="10.9" x2="19.3" y2="10.9" stroke="#efc4b8" stroke-width="0.8"/><rect x="3.4" y="12.6" width="17" height="9.4" fill="#fdebe5"/><rect x="7.5" y="13.8" width="8.9" height="6.4" rx="0.8" fill="#fff" stroke="#9c4a3a" stroke-width="1.1"/><ellipse cx="3.1" cy="16.9" rx="1.8" ry="2.6" fill="#a9493a"/><ellipse cx="20.7" cy="16.9" rx="1.8" ry="2.6" fill="#b0503c"/></svg>
<svg class="s" style="left:533px;top:973.997px;" width="15" height="13" viewBox="0 0 15 13"><path d="M2.2 9.9 L7.6 9.4 M4.6 4.4 L9.2 8.4 M12.4 1.2 L12.1 7" stroke="#1f8a8c" stroke-width="1.3" stroke-linecap="round"/></svg>
<div class="t" style="left:544.50px;top:982.74px;font-size:19.2px;line-height:19.2px;color:#4b4a48;font-weight:normal;letter-spacing:-0.620px;">Invoice J27301_archive.pdf</div>
<div class="t" style="left:944.00px;top:982.08px;font-size:16.8px;line-height:16.8px;color:#605e5c;font-weight:normal;letter-spacing:-0.284px;">About an hour ago</div>
<div class="t" style="left:1145.20px;top:982.08px;font-size:16.8px;line-height:16.8px;color:#605e5c;font-weight:normal;letter-spacing:-0.530px;">Test auto member</div>
<div class="r" style="left:410px;top:1020.83px;width:1264px;height:1px;background:#f3f2f1;"></div>
<svg class="s" style="left:492px;top:1036.83px;" width="24" height="25" viewBox="0 0 24 25"><path d="M2.9 1.8 Q2.9 0.6 4.1 0.6 L15.3 0.6 L20.9 6.2 L20.9 22.2 Q20.9 23.4 19.7 23.4 L4.1 23.4 Q2.9 23.4 2.9 22.2 Z" fill="#fff" stroke="#8a8886" stroke-width="1.1" stroke-linejoin="round"/><path d="M15.3 0.6 L15.3 5 Q15.3 6.2 16.5 6.2 L20.9 6.2" fill="none" stroke="#8a8886" stroke-width="1"/><line x1="4.5" y1="10.9" x2="19.3" y2="10.9" stroke="#efc4b8" stroke-width="0.8"/><rect x="3.4" y="12.6" width="17" height="9.4" fill="#fdebe5"/><rect x="7.5" y="13.8" width="8.9" height="6.4" rx="0.8" fill="#fff" stroke="#9c4a3a" stroke-width="1.1"/><ellipse cx="3.1" cy="16.9" rx="1.8" ry="2.6" fill="#a9493a"/><ellipse cx="20.7" cy="16.9" rx="1.8" ry="2.6" fill="#b0503c"/></svg>
<svg class="s" style="left:533px;top:1031.33px;" width="15" height="13" viewBox="0 0 15 13"><path d="M2.2 9.9 L7.6 9.4 M4.6 4.4 L9.2 8.4 M12.4 1.2 L12.1 7" stroke="#1f8a8c" stroke-width="1.3" stroke-linecap="round"/></svg>
<div class="t" style="left:544.50px;top:1040.08px;font-size:19.2px;line-height:19.2px;color:#4b4a48;font-weight:normal;letter-spacing:-0.544px;">Invoice J273012.pdf</div>
<div class="t" style="left:944.00px;top:1039.41px;font-size:16.8px;line-height:16.8px;color:#605e5c;font-weight:normal;letter-spacing:-0.284px;">About an hour ago</div>
<div class="t" style="left:1145.20px;top:1039.41px;font-size:16.8px;line-height:16.8px;color:#605e5c;font-weight:normal;letter-spacing:-0.530px;">Test auto member</div>
<div class="r" style="left:410px;top:1078.16px;width:1264px;height:1px;background:#f3f2f1;"></div>
<svg class="s" style="left:492px;top:1094.163px;" width="24" height="25" viewBox="0 0 24 25"><path d="M2.9 1.8 Q2.9 0.6 4.1 0.6 L15.3 0.6 L20.9 6.2 L20.9 22.2 Q20.9 23.4 19.7 23.4 L4.1 23.4 Q2.9 23.4 2.9 22.2 Z" fill="#fff" stroke="#8a8886" stroke-width="1.1" stroke-linejoin="round"/><path d="M15.3 0.6 L15.3 5 Q15.3 6.2 16.5 6.2 L20.9 6.2" fill="none" stroke="#8a8886" stroke-width="1"/><line x1="4.5" y1="10.9" x2="19.3" y2="10.9" stroke="#efc4b8" stroke-width="0.8"/><rect x="3.4" y="12.6" width="17" height="9.4" fill="#fdebe5"/><rect x="7.5" y="13.8" width="8.9" height="6.4" rx="0.8" fill="#fff" stroke="#9c4a3a" stroke-width="1.1"/><ellipse cx="3.1" cy="16.9" rx="1.8" ry="2.6" fill="#a9493a"/><ellipse cx="20.7" cy="16.9" rx="1.8" ry="2.6" fill="#b0503c"/></svg>
<svg class="s" style="left:533px;top:1088.663px;" width="15" height="13" viewBox="0 0 15 13"><path d="M2.2 9.9 L7.6 9.4 M4.6 4.4 L9.2 8.4 M12.4 1.2 L12.1 7" stroke="#1f8a8c" stroke-width="1.3" stroke-linecap="round"/></svg>
<div class="t" style="left:544.50px;top:1097.41px;font-size:19.2px;line-height:19.2px;color:#4b4a48;font-weight:normal;letter-spacing:-0.383px;">NDA.pdf</div>
<div class="t" style="left:944.00px;top:1096.74px;font-size:16.8px;line-height:16.8px;color:#605e5c;font-weight:normal;letter-spacing:-0.284px;">About an hour ago</div>
<div class="t" style="left:1145.20px;top:1096.74px;font-size:16.8px;line-height:16.8px;color:#605e5c;font-weight:normal;letter-spacing:-0.530px;">Test auto member</div>
<div class="r" style="left:410px;top:1135.5px;width:1264px;height:1px;background:#f3f2f1;"></div>
<svg class="s" style="left:492px;top:1151.496px;" width="24" height="25" viewBox="0 0 24 25"><path d="M2.9 1.8 Q2.9 0.6 4.1 0.6 L15.3 0.6 L20.9 6.2 L20.9 22.2 Q20.9 23.4 19.7 23.4 L4.1 23.4 Q2.9 23.4 2.9 22.2 Z" fill="#fff" stroke="#8a8886" stroke-width="1.1" stroke-linejoin="round"/><path d="M15.3 0.6 L15.3 5 Q15.3 6.2 16.5 6.2 L20.9 6.2" fill="none" stroke="#8a8886" stroke-width="1"/><line x1="4.5" y1="10.9" x2="19.3" y2="10.9" stroke="#efc4b8" stroke-width="0.8"/><rect x="3.4" y="12.6" width="17" height="9.4" fill="#fdebe5"/><rect x="7.5" y="13.8" width="8.9" height="6.4" rx="0.8" fill="#fff" stroke="#9c4a3a" stroke-width="1.1"/><ellipse cx="3.1" cy="16.9" rx="1.8" ry="2.6" fill="#a9493a"/><ellipse cx="20.7" cy="16.9" rx="1.8" ry="2.6" fill="#b0503c"/></svg>
<svg class="s" style="left:533px;top:1145.996px;" width="15" height="13" viewBox="0 0 15 13"><path d="M2.2 9.9 L7.6 9.4 M4.6 4.4 L9.2 8.4 M12.4 1.2 L12.1 7" stroke="#1f8a8c" stroke-width="1.3" stroke-linecap="round"/></svg>
<div class="t" style="left:544.50px;top:1154.74px;font-size:19.2px;line-height:19.2px;color:#4b4a48;font-weight:normal;letter-spacing:-0.342px;">Nitro ABC - Comp Plan.pdf</div>
<div class="t" style="left:944.00px;top:1154.07px;font-size:16.8px;line-height:16.8px;color:#605e5c;font-weight:normal;letter-spacing:-0.284px;">About an hour ago</div>
<div class="t" style="left:1145.20px;top:1154.07px;font-size:16.8px;line-height:16.8px;color:#605e5c;font-weight:normal;letter-spacing:-0.530px;">Test auto member</div>
<div class="r" style="left:410px;top:1192.83px;width:1264px;height:1px;background:#f3f2f1;"></div>
<svg class="s" style="left:491px;top:1208.663px;" width="26" height="25" viewBox="0 0 26 25"><path d="M6 1 L17 1 L23.5 7.5 L23.5 23.5 L6 23.5 Z" fill="#fff" stroke="#a19f9d" stroke-width="1.1" stroke-linejoin="round"/><path d="M17 1 L17 7.5 L23.5 7.5" fill="none" stroke="#a19f9d" stroke-width="1"/><g stroke="#41649c" stroke-width="1.2"><line x1="15" y1="11.5" x2="21" y2="11.5"/><line x1="15" y1="14.5" x2="21" y2="14.5"/><line x1="15" y1="17.5" x2="21" y2="17.5"/></g><rect x="1" y="7" width="12.7" height="13" fill="#2b579a"/><path d="M3 9.5 L4.8 17.5 L7.3 11.5 L9.8 17.5 L11.6 9.5" fill="none" stroke="#fff" stroke-width="1.3" stroke-linejoin="round"/></svg>
<svg class="s" style="left:533px;top:1203.329px;" width="15" height="13" viewBox="0 0 15 13"><path d="M2.2 9.9 L7.6 9.4 M4.6 4.4 L9.2 8.4 M12.4 1.2 L12.1 7" stroke="#1f8a8c" stroke-width="1.3" stroke-linecap="round"/></svg>
<div class="t" style="left:544.50px;top:1212.08px;font-size:19.2px;line-height:19.2px;color:#4b4a48;font-weight:normal;letter-spacing:-0.567px;">Nitro Cars Lease Contract.docx</div>
<div class="t" style="left:944.00px;top:1211.41px;font-size:16.8px;line-height:16.8px;color:#605e5c;font-weight:normal;letter-spacing:-0.284px;">About an hour ago</div>
<div class="t" style="left:1145.20px;top:1211.41px;font-size:16.8px;line-height:16.8px;color:#605e5c;font-weight:normal;letter-spacing:-0.530px;">Test auto member</div>
<div class="r" style="left:410px;top:1250.16px;width:1264px;height:1px;background:#f3f2f1;"></div>
<svg class="s" style="left:492px;top:1266.162px;" width="24" height="25" viewBox="0 0 24 25"><path d="M2.9 1.8 Q2.9 0.6 4.1 0.6 L15.3 0.6 L20.9 6.2 L20.9 22.2 Q20.9 23.4 19.7 23.4 L4.1 23.4 Q2.9 23.4 2.9 22.2 Z" fill="#fff" stroke="#8a8886" stroke-width="1.1" stroke-linejoin="round"/><path d="M15.3 0.6 L15.3 5 Q15.3 6.2 16.5 6.2 L20.9 6.2" fill="none" stroke="#8a8886" stroke-width="1"/><line x1="4.5" y1="10.9" x2="19.3" y2="10.9" stroke="#efc4b8" stroke-width="0.8"/><rect x="3.4" y="12.6" width="17" height="9.4" fill="#fdebe5"/><rect x="7.5" y="13.8" width="8.9" height="6.4" rx="0.8" fill="#fff" stroke="#9c4a3a" stroke-width="1.1"/><ellipse cx="3.1" cy="16.9" rx="1.8" ry="2.6" fill="#a9493a"/><ellipse cx="20.7" cy="16.9" rx="1.8" ry="2.6" fill="#b0503c"/></svg>
<svg class="s" style="left:533px;top:1260.662px;" width="15" height="13" viewBox="0 0 15 13"><path d="M2.2 9.9 L7.6 9.4 M4.6 4.4 L9.2 8.4 M12.4 1.2 L12.1 7" stroke="#1f8a8c" stroke-width="1.3" stroke-linecap="round"/></svg>
<div class="t" style="left:544.50px;top:1269.41px;font-size:19.2px;line-height:19.2px;color:#4b4a48;font-weight:normal;letter-spacing:-0.486px;">Nitro Cars Lease Contract.pdf</div>
<div class="t" style="left:944.00px;top:1268.74px;font-size:16.8px;line-height:16.8px;color:#605e5c;font-weight:normal;letter-spacing:-0.284px;">About an hour ago</div>
<div class="t" style="left:1145.20px;top:1268.74px;font-size:16.8px;line-height:16.8px;color:#605e5c;font-weight:normal;letter-spacing:-0.530px;">Test auto member</div>
<div class="r" style="left:410px;top:1307.49px;width:1264px;height:1px;background:#f3f2f1;"></div>
<svg class="s" style="left:492px;top:1323.495px;" width="24" height="25" viewBox="0 0 24 25"><path d="M2.9 1.8 Q2.9 0.6 4.1 0.6 L15.3 0.6 L20.9 6.2 L20.9 22.2 Q20.9 23.4 19.7 23.4 L4.1 23.4 Q2.9 23.4 2.9 22.2 Z" fill="#fff" stroke="#8a8886" stroke-width="1.1" stroke-linejoin="round"/><path d="M15.3 0.6 L15.3 5 Q15.3 6.2 16.5 6.2 L20.9 6.2" fill="none" stroke="#8a8886" stroke-width="1"/><line x1="4.5" y1="10.9" x2="19.3" y2="10.9" stroke="#efc4b8" stroke-width="0.8"/><rect x="3.4" y="12.6" width="17" height="9.4" fill="#fdebe5"/><rect x="7.5" y="13.8" width="8.9" height="6.4" rx="0.8" fill="#fff" stroke="#9c4a3a" stroke-width="1.1"/><ellipse cx="3.1" cy="16.9" rx="1.8" ry="2.6" fill="#a9493a"/><ellipse cx="20.7" cy="16.9" rx="1.8" ry="2.6" fill="#b0503c"/></svg>
<svg class="s" style="left:533px;top:1317.995px;" width="15" height="13" viewBox="0 0 15 13"><path d="M2.2 9.9 L7.6 9.4 M4.6 4.4 L9.2 8.4 M12.4 1.2 L12.1 7" stroke="#1f8a8c" stroke-width="1.3" stroke-linecap="round"/></svg>
<div class="t" style="left:544.50px;top:1326.74px;font-size:19.2px;line-height:19.2px;color:#4b4a48;font-weight:normal;letter-spacing:-0.441px;">Nitro Expense.pdf</div>
<div class="t" style="left:944.00px;top:1326.07px;font-size:16.8px;line-height:16.8px;color:#605e5c;font-weight:normal;letter-spacing:-0.284px;">About an hour ago</div>
<div class="t" style="left:1145.20px;top:1326.07px;font-size:16.8px;line-height:16.8px;color:#605e5c;font-weight:normal;letter-spacing:-0.530px;">Test auto member</div>
<svg class="s" style="left:432px;top:522.5px;" width="22" height="22" viewBox="0 0 22 22"><circle cx="10.7" cy="10.8" r="10.2" fill="#038387"/><path d="M6 11 L9.3 14.3 L15.5 8" fill="none" stroke="#fff" stroke-width="2" stroke-linecap="round" stroke-linejoin="round"/></svg>
<div class="r" style="left:1333px;top:512.2px;width:240px;height:821px;background:#fff;box-shadow:0 6.4px 14.4px rgba(0,0,0,0.133),0 1.2px 3.6px rgba(0,0,0,0.11);"></div>
<div class="t" style="left:1344.40px;top:526.25px;font-size:19.2px;line-height:19.2px;color:#4b4a48;font-weight:normal;letter-spacing:-0.788px;">Open</div>
<svg class="s" style="left:1547px;top:527.7px;" width="14" height="19" viewBox="0 0 14 19"><path d="M3 2 L10.5 9.5 L3 17" fill="none" stroke="#797775" stroke-width="1.2"/></svg>
<div class="t" style="left:1344.40px;top:574.25px;font-size:19.2px;line-height:19.2px;color:#4b4a48;font-weight:normal;letter-spacing:-0.975px;">Preview</div>
<div class="t" style="left:1344.40px;top:622.25px;font-size:19.2px;line-height:19.2px;color:#4b4a48;font-weight:normal;letter-spacing:-1.656px;">Share</div>
<div class="t" style="left:1344.40px;top:670.25px;font-size:19.2px;line-height:19.2px;color:#4b4a48;font-weight:normal;letter-spacing:-0.389px;">Copy link</div>
<div class="t" style="left:1344.40px;top:718.25px;font-size:19.2px;line-height:19.2px;color:#4b4a48;font-weight:normal;letter-spacing:-0.906px;">Manage access</div>
<div class="r" style="left:1333px;top:752.2px;width:240px;height:1px;background:#edebe9;"></div>
<div class="t" style="left:1344.40px;top:767.25px;font-size:19.2px;line-height:19.2px;color:#4b4a48;font-weight:normal;letter-spacing:-0.397px;">Download</div>
<div class="t" style="left:1344.40px;top:815.25px;font-size:19.2px;line-height:19.2px;color:#4b4a48;font-weight:normal;letter-spacing:-0.761px;">Delete</div>
<div class="t" style="left:1344.40px;top:863.25px;font-size:19.2px;line-height:19.2px;color:#4b4a48;font-weight:normal;letter-spacing:-0.197px;">Automate</div>
<svg class="s" style="left:1547px;top:864.7px;" width="14" height="19" viewBox="0 0 14 19"><path d="M3 2 L10.5 9.5 L3 17" fill="none" stroke="#797775" stroke-width="1.2"/></svg>
<div class="r" style="left:1333px;top:897.2px;width:240px;height:1px;background:#edebe9;"></div>
<div class="t" style="left:1344.40px;top:912.25px;font-size:19.2px;line-height:19.2px;color:#4b4a48;font-weight:normal;letter-spacing:-1.395px;">Rename</div>
<div class="t" style="left:1344.40px;top:960.25px;font-size:19.2px;line-height:19.2px;color:#4b4a48;font-weight:normal;letter-spacing:-0.091px;">Pin to top</div>
<div class="t" style="left:1344.40px;top:1008.25px;font-size:19.2px;line-height:19.2px;color:#4b4a48;font-weight:normal;letter-spacing:-0.116px;">Move to</div>
<div class="t" style="left:1344.40px;top:1056.25px;font-size:19.2px;line-height:19.2px;color:#4b4a48;font-weight:normal;letter-spacing:-0.377px;">Copy to</div>
<div class="r" style="left:1333px;top:1090.2px;width:240px;height:1px;background:#edebe9;"></div>
<div class="t" style="left:1344.40px;top:1105.25px;font-size:19.2px;line-height:19.2px;color:#4b4a48;font-weight:normal;letter-spacing:-0.367px;">Version history</div>
<div class="t" style="left:1344.40px;top:1153.25px;font-size:19.2px;line-height:19.2px;color:#4b4a48;font-weight:normal;letter-spacing:-0.312px;">Alert me</div>
<div class="t" style="left:1344.40px;top:1201.25px;font-size:19.2px;line-height:19.2px;color:#4b4a48;font-weight:normal;letter-spacing:-0.079px;">More</div>
<svg class="s" style="left:1547px;top:1202.7px;" width="14" height="19" viewBox="0 0 14 19"><path d="M3 2 L10.5 9.5 L3 17" fill="none" stroke="#797775" stroke-width="1.2"/></svg>
<div class="r" style="left:1333px;top:1235.2px;width:240px;height:1px;background:#edebe9;"></div>
<div class="t" style="left:1344.40px;top:1250.25px;font-size:19.2px;line-height:19.2px;color:#4b4a48;font-weight:normal;letter-spacing:-0.209px;">Open in Nitro Pro</div>
<div class="r" style="left:1333px;top:1284.2px;width:240px;height:1px;background:#edebe9;"></div>
<div class="t" style="left:1344.40px;top:1299.25px;font-size:19.2px;line-height:19.2px;color:#4b4a48;font-weight:normal;letter-spacing:-0.666px;">Details</div>
<div class="r" style="left:1639.3px;top:204.1px;width:216.5px;height:66.70000000000002px;box-sizing:border-box;border:2.3px solid #98121a;box-shadow:3px 4px 7px rgba(0,0,0,0.30), inset 4px 4px 7px rgba(0,0,0,0.16);"></div>
<div class="r" style="left:1323px;top:1235px;width:258px;height:56px;box-sizing:border-box;border:2.3px solid #98121a;box-shadow:3px 4px 7px rgba(0,0,0,0.30), inset 4px 4px 7px rgba(0,0,0,0.16);"></div>
<div class="r" style="left:2537px;top:267px;width:23px;height:1077px;background:#f0f0f0;"></div>
<div class="r" style="left:2540px;top:370.5px;width:17px;height:538.5px;background:#c1c1c1;"></div>
<svg class="s" style="left:2542px;top:275px;" width="13" height="9" viewBox="0 0 13 9"><path d="M1.5 7.5 L6.5 1.5 L11.5 7.5 Z" fill="#505050"/></svg>
<svg class="s" style="left:2542px;top:1327px;" width="13" height="9" viewBox="0 0 13 9"><path d="M1.5 1.5 L6.5 7.5 L11.5 1.5 Z" fill="#505050"/></svg>
<svg class="s" style="left:1740px;top:570px;" width="30" height="36" viewBox="0 0 30 36"><path d="M6 6.4 L6 28.3 L11.4 23.5 L15.7 30.5 L19.5 28.8 L15.3 22.4 L21 22.4 Z" fill="#fff" stroke="#222" stroke-width="1.4" stroke-linejoin="round"/></svg>
</body></html>
